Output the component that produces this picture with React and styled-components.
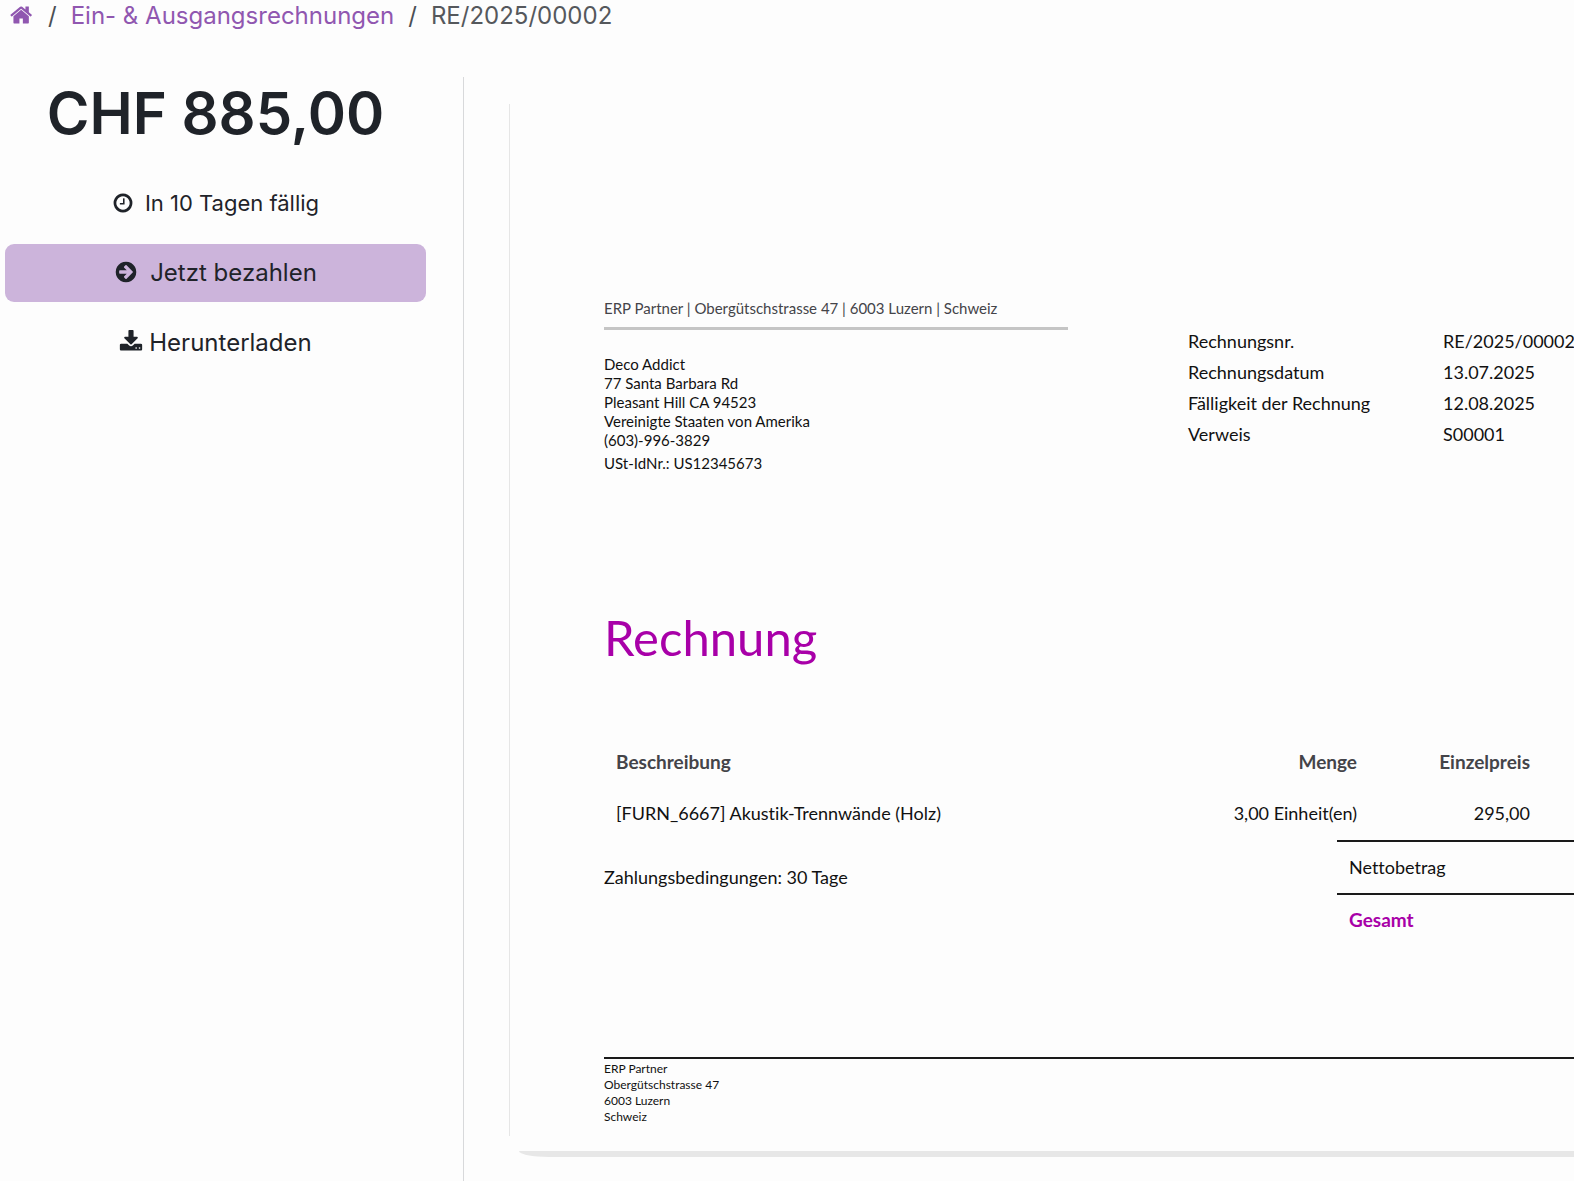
import styled, { createGlobalStyle } from 'styled-components';

const ICONS = {
  home: 'M1408 992v480q0 26-19 45t-45 19h-384v-384h-256v384h-384q-26 0-45-19t-19-45v-480q0-1 .5-3t.5-3l575-474 575 474q1 2 1 6zm223-69l-62 74q-8 9-21 11h-3q-13 0-21-7l-692-577-692 577q-12 8-24 7-13-2-21-11l-62-74q-8-10-7-23.5t11-21.5l719-599q32-26 76-26t76 26l244 204v-195q0-14 9-23t23-9h192q14 0 23 9t9 23v408l219 182q10 8 11 21.5t-7 23.5z',
  clock:
    'M1024 544v448q0 14-9 23t-23 9h-320q-14 0-23-9t-9-23v-64q0-14 9-23t23-9h224v-352q0-14 9-23t23-9h64q14 0 23 9t9 23zm416 352q0-148-73-273t-198-198-273-73-273 73-198 198-73 273 73 273 198 198 273 73 273-73 198-198 73-273zm224 0q0 209-103 385.5t-279.5 279.5-385.5 103-385.5-103-279.5-279.5-103-385.5 103-385.5 279.5-279.5 385.5-103 385.5 103 279.5 279.5 103 385.5z',
  arrow:
    'M1413 896q0-27-18-45l-91-91-362-362q-18-18-45-18t-45 18l-91 91q-18 18-18 45t18 45l189 189h-502q-26 0-45 19t-19 45v128q0 26 19 45t45 19h502l-189 189q-18 18-18 45t18 45l91 91q18 18 45 18t45-18l362-362 91-91q18-18 18-45zm251 0q0 209-103 385.5t-279.5 279.5-385.5 103-385.5-103-279.5-279.5-103-385.5 103-385.5 279.5-279.5 385.5-103 385.5 103 279.5 279.5 103 385.5z',
  download:
    'M1344 1344q0-26-19-45t-45-19-45 19-19 45 19 45 45 19 45-19 19-45zm256 0q0-26-19-45t-45-19-45 19-19 45 19 45 45 19 45-19 19-45zm128-224v320q0 40-28 68t-68 28h-1472q-40 0-68-28t-28-68v-320q0-40 28-68t68-28h465l135 136q58 56 136 56t136-56l136-136h464q40 0 68 28t28 68zm-325-569q17 41-14 70l-448 448q-18 19-45 19t-45-19l-448-448q-31-29-14-70 17-39 59-39h256v-448q0-26 19-45t45-19h256q26 0 45 19t19 45v448h256q42 0 59 39z'
};

const META = [
  ['Rechnungsnr.', 'RE/2025/00002'],
  ['Rechnungsdatum', '13.07.2025'],
  ['Fälligkeit der Rechnung', '12.08.2025'],
  ['Verweis', 'S00001']
];

const ITEMS = [{ name: '[FURN_6667] Akustik-Trennwände (Holz)', quantity: '3,00 Einheit(en)', price: '295,00' }];

function Icon({ name, size = 24 }) {
  return (
    <svg width={size} height={size} viewBox="0 0 1792 1792" fill="currentColor" aria-hidden="true">
      <path d={ICONS[name]} />
    </svg>
  );
}

export default function App() {
  return (
    <>
      <GlobalStyle />
      <StyledPage>
        <StyledBreadcrumb aria-label="Breadcrumb">
          <a href="#home" aria-label="Home">
            <Icon name="home" />
          </a>
          <span className="separator">/</span>
          <a href="#invoices">Ein- &amp; Ausgangsrechnungen</a>
          <span className="separator">/</span>
          <span className="current">RE/2025/00002</span>
        </StyledBreadcrumb>
        <StyledContent>
          <StyledSidebar>
            <StyledAmount>CHF 885,00</StyledAmount>
            <StyledDue>
              <Icon name="clock" size={22} />
              In 10 Tagen fällig
            </StyledDue>
            <StyledActions>
              <StyledButton $primary $gap="12px">
                <Icon name="arrow" />
                Jetzt bezahlen
              </StyledButton>
              <StyledButton $gap="6px">
                <Icon name="download" />
                Herunterladen
              </StyledButton>
            </StyledActions>
          </StyledSidebar>
          <StyledPreview>
            <Invoice />
            <StyledSheetEdge />
          </StyledPreview>
        </StyledContent>
      </StyledPage>
    </>
  );
}

function Invoice() {
  return (
    <StyledSheet>
      <StyledInvoiceHead>
        <StyledAddress>
          <p className="sender">ERP Partner | Obergütschstrasse 47 | 6003 Luzern | Schweiz</p>
          <p>Deco Addict</p>
          <p>77 Santa Barbara Rd</p>
          <p>Pleasant Hill CA 94523</p>
          <p>Vereinigte Staaten von Amerika</p>
          <p>(603)-996-3829</p>
          <p className="vat">USt-IdNr.: US12345673</p>
        </StyledAddress>
        <StyledMeta>
          {META.map(([label, value]) => (
            <div key={label}>
              <dt>{label}</dt>
              <dd>{value}</dd>
            </div>
          ))}
        </StyledMeta>
      </StyledInvoiceHead>
      <StyledTitle>Rechnung</StyledTitle>
      <StyledItems>
        <thead>
          <tr>
            <th scope="col">Beschreibung</th>
            <th scope="col" className="quantity">
              Menge
            </th>
            <th scope="col" className="price">
              Einzelpreis
            </th>
          </tr>
        </thead>
        <tbody>
          {ITEMS.map((item) => (
            <tr key={item.name}>
              <td>{item.name}</td>
              <td className="quantity">{item.quantity}</td>
              <td className="price">{item.price}</td>
            </tr>
          ))}
        </tbody>
      </StyledItems>
      <StyledSummary>
        <p>Zahlungsbedingungen: 30 Tage</p>
        <StyledTotals>
          <tbody>
            <tr>
              <th scope="row">Nettobetrag</th>
            </tr>
            <tr className="total">
              <th scope="row">Gesamt</th>
            </tr>
          </tbody>
        </StyledTotals>
      </StyledSummary>
      <StyledFooter>
        <p>ERP Partner</p>
        <p>Obergütschstrasse 47</p>
        <p>6003 Luzern</p>
        <p>Schweiz</p>
      </StyledFooter>
    </StyledSheet>
  );
}

const GlobalStyle = createGlobalStyle`
  * {
    box-sizing: border-box;
  }

  body {
    background-color: #fdfdfd;
    margin: 0;
  }

  p, h1, h2, dl, dd {
    margin: 0;
  }
`;

const StyledPage = styled.div`
  color: #1f2329;
  display: flex;
  flex-direction: column;
  font-family: Inter, sans-serif;
  font-size: 24px;
  min-height: 100vh;
  overflow: hidden;
`;

const StyledBreadcrumb = styled.nav`
  align-items: center;
  display: flex;
  height: 30px;
  padding-left: 10px;

  a {
    color: #9057b0;
    display: flex;
    text-decoration: none;
  }

  .separator {
    color: #4b4f54;
    padding: 0 14px;
  }

  .current {
    color: #55585c;
  }
`;

const StyledContent = styled.div`
  display: flex;
  flex: 1;
  margin-top: 47px;
`;

const StyledSidebar = styled.aside`
  border-right: 1px solid #d8d9db;
  flex: 0 0 464px;
  padding: 0 37px 0 5px;
  text-align: center;
`;

const StyledAmount = styled.h1`
  font-size: 58px;
  font-weight: 600;
  line-height: 72px;
`;

const StyledDue = styled.p`
  align-items: center;
  display: flex;
  font-size: 22px;
  gap: 11px;
  justify-content: center;
  line-height: 28px;
  margin-top: 40px;
`;

const StyledActions = styled.div`
  display: flex;
  flex-direction: column;
  gap: 12px;
  margin-top: 27px;
`;

const StyledButton = styled.button`
  align-items: center;
  background-color: ${({ $primary }) => ($primary ? '#ccb4db' : 'transparent')};
  border: none;
  border-radius: 9px;
  color: inherit;
  cursor: pointer;
  display: flex;
  font: inherit;
  gap: ${({ $gap }) => $gap};
  height: 58px;
  justify-content: center;
  padding: 0 0 2px;
`;

const StyledPreview = styled.main`
  flex: 1;
  font-family: Lato, sans-serif;
  font-variant-ligatures: none;
  min-width: 0;
  padding: 27px 0 24px 45px;
`;

const StyledSheet = styled.article`
  border-left: 1px solid #e6e6e6;
  color: #111;
  font-size: 18px;
  padding: 194px 0 11px 94px;
`;

const StyledSheetEdge = styled.div`
  background-color: #e7e7e7;
  border-bottom-left-radius: 30px 6px;
  height: 6px;
  margin: 15px 0 0 10px;
`;

const StyledInvoiceHead = styled.header`
  display: flex;
  justify-content: space-between;
`;

const StyledAddress = styled.address`
  flex: 0 0 464px;
  font-size: 15px;
  font-style: normal;
  line-height: 19px;

  .sender {
    border-bottom: 3px solid #c5c5c5;
    color: #444449;
    line-height: 20px;
    margin-bottom: 25px;
    padding-bottom: 9px;
  }

  .vat {
    margin-top: 4px;
  }
`;

const StyledMeta = styled.dl`
  line-height: 31px;
  margin-top: 28px;

  div {
    display: grid;
    grid-template-columns: 255px 131px;
  }
`;

const StyledTitle = styled.h2`
  color: #a800a8;
  font-size: 49px;
  font-weight: 400;
  line-height: 60px;
  margin-top: 134px;
`;

const StyledItems = styled.table`
  border-collapse: collapse;
  margin-top: 68px;
  width: 100%;

  th,
  td {
    height: 52px;
    padding: 0 0 0 12px;
    text-align: left;
  }

  th {
    color: #444449;
    font-size: 19px;
  }

  td {
    height: 53px;
    padding-bottom: 2px;
  }

  .quantity {
    text-align: right;
    width: 160px;
  }

  .price {
    padding-right: 44px;
    text-align: right;
    width: 217px;
  }
`;

const StyledSummary = styled.section`
  align-items: flex-start;
  display: flex;
  justify-content: space-between;

  p {
    line-height: 24px;
    padding-top: 25px;
  }
`;

const StyledTotals = styled.table`
  border-collapse: separate;
  border-spacing: 0;
  width: 237px;

  th {
    border-top: 2px solid #1a1a1a;
    font-weight: 400;
    height: 53px;
    padding: 0 12px 2px;
    text-align: left;
  }

  .total th {
    color: #a800a8;
    font-size: 19px;
    font-weight: 700;
  }
`;

const StyledFooter = styled.footer`
  border-top: 2px solid #1a1a1a;
  font-size: 12px;
  line-height: 16px;
  margin-top: 111px;
  padding-top: 2px;
`;
